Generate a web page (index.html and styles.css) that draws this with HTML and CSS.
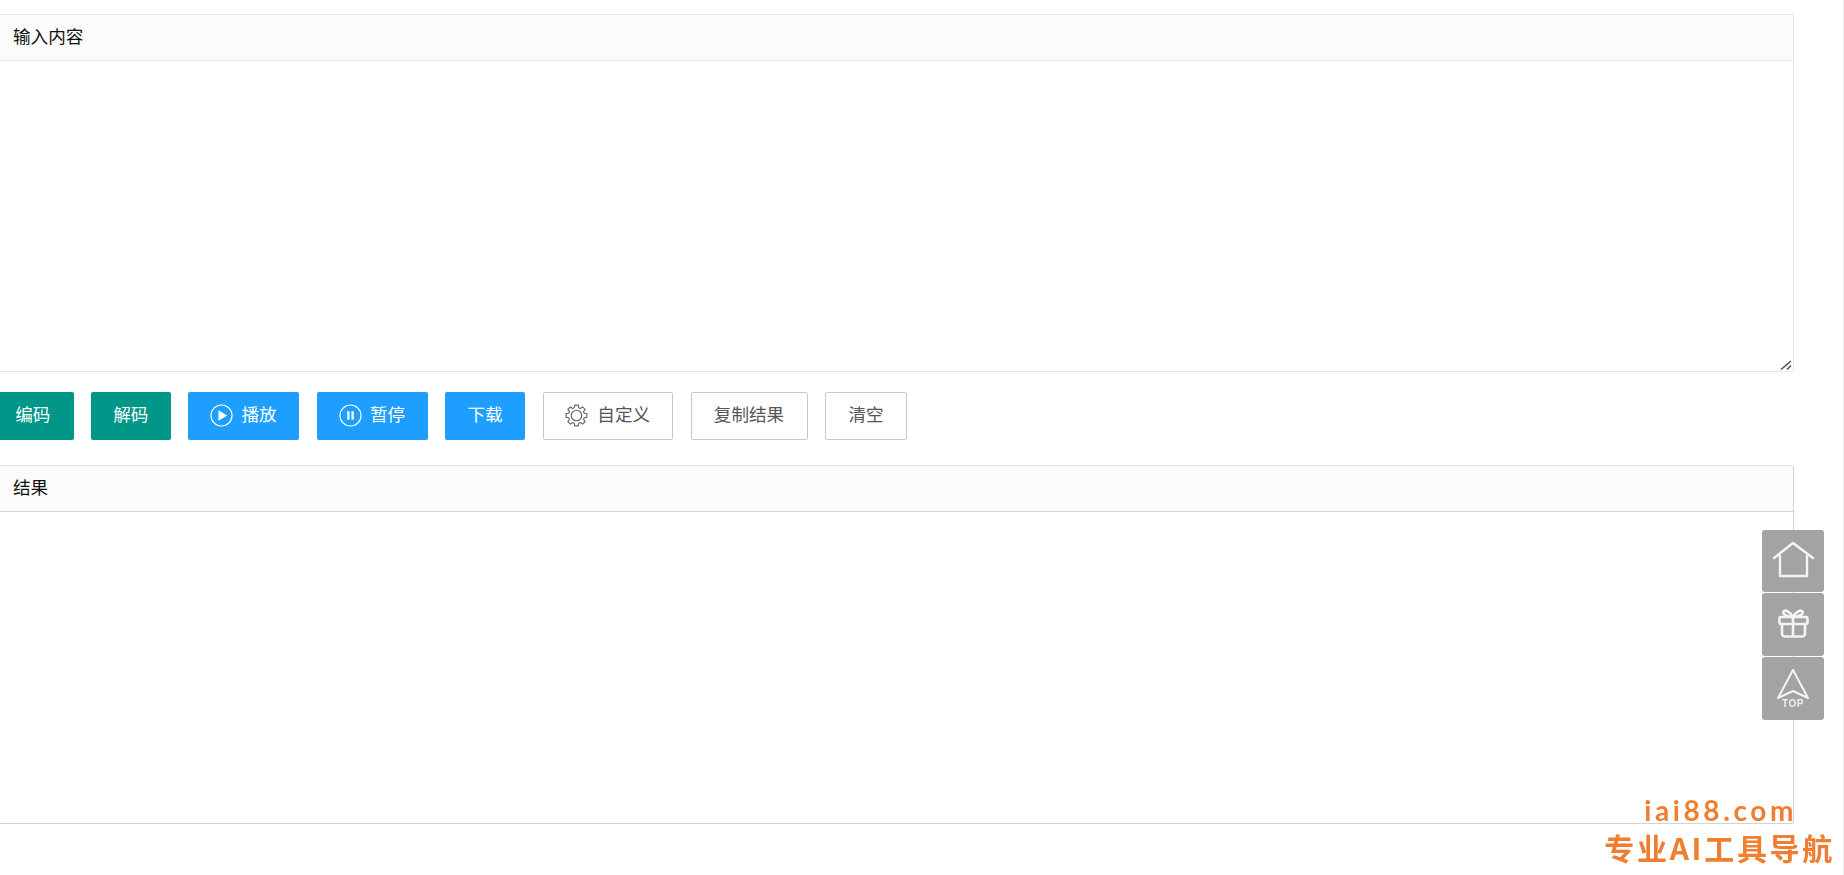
FILE: index.html
```html
<!DOCTYPE html>
<html lang="zh-CN">
<head>
<meta charset="utf-8">
<title>编码解码</title>
<link rel="stylesheet" href="styles.css">
</head>
<body>
<main class="page">
  <section class="panel panel-input">
    <div class="panel-head">输入内容</div>
    <textarea class="panel-area area-input"></textarea>
    <svg class="grip" viewBox="0 0 12 10"><path d="M1 9.500 11 1M7 9.500 11 5.500" fill="none" stroke="#555" stroke-width="1.600"/></svg>
  </section>
  <div class="actions">
    <button class="btn btn-green btn-first">编码</button>
    <button class="btn btn-green btn-decode">解码</button>
    <button class="btn btn-blue btn-icon">
      <svg class="ico" viewBox="0 0 24 24"><circle cx="12" cy="12" r="11" fill="none" stroke="#fff" stroke-width="1.200"/><path d="M8.800 6.600 18 12l-9.200 5.400z" fill="#fff"/></svg>播放</button>
    <button class="btn btn-blue btn-icon">
      <svg class="ico" viewBox="0 0 24 24"><circle cx="12" cy="12" r="11" fill="none" stroke="#fff" stroke-width="1.200"/><path d="M8.600 7.500h2.400v9H8.600zM13 7.500h2.400v9H13z" fill="#fff"/></svg>暂停</button>
    <button class="btn btn-blue btn-plain">下载</button>
    <button class="btn btn-line btn-gear">
      <svg class="ico" viewBox="0 0 24 24"><path d="M9.680 3.930 10.090 1.170H13.910L14.320 3.930 16.070 4.650 18.310 3 21.010 5.690 19.350 7.930 20.070 9.680 22.830 10.090V13.910L20.070 14.320 19.350 16.070 21.010 18.310 18.310 21.010 16.070 19.350 14.320 20.070 13.910 22.830H10.090L9.680 20.070 7.930 19.350 5.690 21.010 2.990 18.310 4.650 16.070 3.930 14.320 1.170 13.910V10.090L3.930 9.680 4.650 7.930 2.990 5.690 5.690 2.990 7.930 4.650Z" fill="none" stroke="#666" stroke-width="1.200" stroke-linejoin="round"/><circle cx="12" cy="12" r="5.500" fill="none" stroke="#666" stroke-width="1.200"/></svg>自定义</button>
    <button class="btn btn-line btn-copy">复制结果</button>
    <button class="btn btn-line btn-clear">清空</button>
  </div>
  <section class="panel panel-result">
    <div class="panel-head">结果</div>
    <div class="panel-area area-result"></div>
  </section>
</main>
<aside class="side">
  <a class="side-item"><svg viewBox="0 0 62 62" class="side-ico"><path d="M12 28 31 13l20 15M18 26v20h27V26" fill="none" stroke="#f4f4f4" stroke-width="2.400" stroke-linecap="round" stroke-linejoin="round"/></svg></a>
  <a class="side-item"><svg viewBox="0 0 62 62" class="side-ico"><path d="M19 24h25a1.500 1.500 0 0 1 1.500 1.500v4a1.500 1.500 0 0 1-1.500 1.500H19a1.500 1.500 0 0 1-1.500-1.500v-4A1.500 1.500 0 0 1 19 24zM20 31v9.500a3 3 0 0 0 3 3h17a3 3 0 0 0 3-3V31M31 24v19.500M31 24c-3-5-8-8-9.500-5.500S25 24 31 24zM31 24c3-5 8-8 9.500-5.500S37 24 31 24z" fill="none" stroke="#f4f4f4" stroke-width="2.600" stroke-linejoin="round"/></svg></a>
  <a class="side-item side-top"><svg viewBox="0 0 62 62" class="side-ico"><path d="M31 13 16 41l15-7 15 7z" fill="none" stroke="#f4f4f4" stroke-width="2" stroke-linejoin="round"/></svg><span class="top-label">TOP</span></a>
</aside>
<div class="brand">
  <div class="brand-site">iai88.com</div>
  <div class="brand-name">专业AI工具导航</div>
</div>
</body>
</html>
```
FILE: styles.css
```css
* { box-sizing: border-box; }
html, body { height: 100%; }
body {
  margin: 0;
  overflow: hidden;
  background: #fff;
  border-right: 1px solid #eee;
  font-family: "Noto Sans CJK SC", "Liberation Sans", sans-serif;
  color: #333;
}
.page {
  width: 1814px;
  margin-left: -20px;
  padding-top: 14px;
}
.panel {
  position: relative;
  border: 1px solid #e6e6e6;
  border-radius: 2px;
}
.panel-head {
  height: 46px;
  padding-left: 32px;
  line-height: 42px;
  font-size: 17.6px;
  font-weight: 400;
  color: #111;
  background: #fbfbfb;
  border-bottom: 1px solid #e6e6e6;
}
.panel-area { display: block; width: 100%; border: 0; outline: 0; background: #fff; }
.area-input { height: 310px; padding: 0; resize: none; }
.area-result { height: 311px; }
.panel-result { border-color: #e2e2e2 #d2d2d2 #d2d2d2; }
.panel-result .panel-head { border-bottom-color: #d2d2d2; }
.grip {
  position: absolute;
  right: 1px;
  bottom: 1px;
  width: 12px;
  height: 10px;
}
.actions {
  display: flex;
  gap: 17.500px;
  height: 48px;
  margin: 20px 0 25px;
  padding-left: 12px;
}
.btn {
  display: flex;
  align-items: center;
  justify-content: center;
  height: 48px;
  padding: 0 0 6px;
  border: 1px solid transparent;
  border-radius: 2px;
  font: 400 17.6px "Noto Sans CJK SC", "Liberation Sans", sans-serif;
  color: #fff;
}
.btn-green { background: #009688; }
.btn-blue { background: #1e9fff; }
.btn-first { width: 81.500px; }
.btn-decode { width: 79.500px; }
.btn-plain { width: 80px; }
.btn-icon { width: 111px; gap: 8px; }
.btn-line { background: #fff; border-color: #c9c9c9; color: #555; }
.btn-gear { width: 130.500px; gap: 9px; }
.btn-copy { width: 117px; }
.btn-clear { width: 82px; }
.ico { width: 23px; height: 23px; flex: none; margin-top: 4px; }
.side {
  position: fixed;
  top: 530px;
  left: 1762px;
  width: 62px;
  display: flex;
  flex-direction: column;
  gap: 1.100px;
}
.side-item {
  position: relative;
  display: block;
  height: 62.400px;
  background: #a3a3a3;
  border-radius: 3px;
}
.side-top { height: 63.400px; }
.side-ico { display: block; width: 62px; height: 62px; }
.top-label {
  position: absolute;
  left: 0; right: 0;
  bottom: 11px;
  text-align: center;
  font: 700 10px/11px "Liberation Sans", sans-serif;
  letter-spacing: .5px;
  color: #eee;
}
.brand {
  position: fixed;
  right: 0;
  bottom: 0;
  width: 260px;
  color: #ef7e31;
  text-align: right;
}
.brand-site {
  font: 700 28px/30px Lato, sans-serif;
  letter-spacing: 3.600px;
  padding-right: 47px;
  margin-bottom: 4px;
}
.brand-name {
  font: 700 30px/36px "Noto Sans CJK SC", Lato, sans-serif;
  letter-spacing: 2.700px;
  padding-right: 9px;
  margin-bottom: 10px;
}
```
